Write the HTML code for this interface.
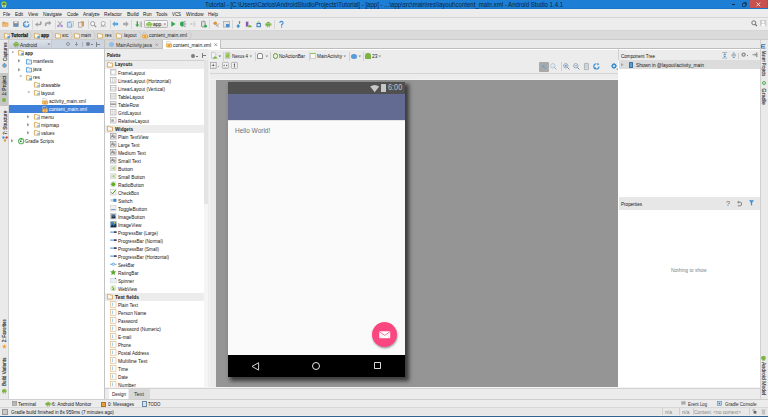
<!DOCTYPE html>
<html><head><meta charset="utf-8">
<style>
*{margin:0;padding:0;box-sizing:border-box}
html,body{width:768px;height:417px;overflow:hidden;background:#ececec;font-family:"Liberation Sans",sans-serif;position:relative}
.a{position:absolute}
.t{position:absolute;white-space:nowrap;line-height:1;transform-origin:0 50%;-webkit-text-stroke:0.02px currentColor}
svg.a{overflow:visible}
</style></head><body>
<div class="a" style="left:0px;top:0px;width:768px;height:9px;background:#1c7fd5;"></div>
<div class="a" style="left:0px;top:8.4px;width:768px;height:0.6px;background:#1a76c8;"></div>
<svg class="a" style="left:1px;top:0.8px" width="6" height="6.5" viewBox="0 0 6 6.5"><circle cx="2.9" cy="3.1" r="2.8" fill="#8cc53f"/><rect x="1.7" y="2.2" width="2.6" height="2" fill="#6b6b5a"/><path d="M1.1 4.2H5V6.4H1.1z" fill="#e6f2d8"/><rect x="1.7" y="4.6" width="2.6" height="1.1" fill="#5aa52a"/></svg>
<div class="t" style="left:205px;top:1.28px;font-size:7px;color:#0c2848;transform:scaleX(0.867);-webkit-text-stroke:0.05px currentColor">Tutorial - [C:\Users\Carlos\AndroidStudioProjects\Tutorial] - [app] - ...\app\src\main\res\layout\content_main.xml - Android Studio 1.4.1</div>
<div class="a" style="left:732px;top:4.2px;width:3.2px;height:0.8px;background:#14283f;"></div>
<svg class="a" style="left:741.8px;top:1.5px" width="5" height="5" viewBox="0 0 5 5"><path d="M1.5 0.5H4.5V3.5M0.5 1.5H3.5V4.5H0.5z" fill="none" stroke="#14283f" stroke-width="0.7"/></svg>
<div class="a" style="left:750px;top:0px;width:17px;height:7.5px;background:#c8504f;"></div>
<svg class="a" style="left:756.2px;top:1.6px" width="5" height="5" viewBox="0 0 5 5"><path d="M0.6 0.6L4.2 4.2M4.2 0.6L0.6 4.2" stroke="#fff" stroke-width="0.8"/></svg>
<div class="a" style="left:0px;top:9px;width:768px;height:8px;background:#ececec;"></div>
<div class="a" style="left:0px;top:17px;width:768px;height:1px;background:#d6d6d6;"></div>
<div class="t" style="left:2.5px;top:10.92px;font-size:6.1px;color:#1a1a1a;transform:scaleX(0.733);">File</div>
<div class="t" style="left:14.8px;top:10.92px;font-size:6.1px;color:#1a1a1a;transform:scaleX(0.780);">Edit</div>
<div class="t" style="left:28px;top:10.92px;font-size:6.1px;color:#1a1a1a;transform:scaleX(0.763);">View</div>
<div class="t" style="left:43px;top:10.92px;font-size:6.1px;color:#1a1a1a;transform:scaleX(0.789);">Navigate</div>
<div class="t" style="left:66.5px;top:10.92px;font-size:6.1px;color:#1a1a1a;transform:scaleX(0.789);">Code</div>
<div class="t" style="left:83px;top:10.92px;font-size:6.1px;color:#1a1a1a;transform:scaleX(0.760);">Analyze</div>
<div class="t" style="left:104px;top:10.92px;font-size:6.1px;color:#1a1a1a;transform:scaleX(0.768);">Refactor</div>
<div class="t" style="left:126.6px;top:10.92px;font-size:6.1px;color:#1a1a1a;transform:scaleX(0.863);">Build</div>
<div class="t" style="left:142.5px;top:10.92px;font-size:6.1px;color:#1a1a1a;transform:scaleX(0.778);">Run</div>
<div class="t" style="left:156px;top:10.92px;font-size:6.1px;color:#1a1a1a;transform:scaleX(0.808);">Tools</div>
<div class="t" style="left:172px;top:10.92px;font-size:6.1px;color:#1a1a1a;transform:scaleX(0.718);">VCS</div>
<div class="t" style="left:185.5px;top:10.92px;font-size:6.1px;color:#1a1a1a;transform:scaleX(0.807);">Window</div>
<div class="t" style="left:208px;top:10.92px;font-size:6.1px;color:#1a1a1a;transform:scaleX(0.797);">Help</div>
<div class="a" style="left:0px;top:18px;width:768px;height:12px;background:#ededed;"></div>
<div class="a" style="left:0px;top:30px;width:768px;height:0.8px;background:#d6d6d6;"></div>
<svg class="a" style="left:2.3px;top:21.1px" width="7" height="6" viewBox="0 0 7 6"><path d="M0.3 0.8H2.6L3.3 1.5H6.2V5.5H0.3z" fill="#d9a25a"/><path d="M0.6 2.4H6.6L6 5.6H0.3z" fill="#e9bb77"/></svg>
<svg class="a" style="left:12.8px;top:21.0px" width="6" height="6" viewBox="0 0 6 6"><rect x="0.3" y="0.3" width="5.2" height="5.4" fill="#7d7d7d"/><rect x="1.3" y="0.3" width="3.2" height="2" fill="#f0f0f0"/><rect x="1.6" y="3.3" width="2.6" height="2.4" fill="#5aa0dc"/></svg>
<svg class="a" style="left:22.5px;top:20.8px" width="6.5" height="6.5" viewBox="0 0 6.5 6.5"><path d="M3.2 0.6A2.7 2.7 0 1 0 5.9 3.3" fill="none" stroke="#3f8fd2" stroke-width="1.2"/><path d="M3.2 6A2.7 2.7 0 0 0 0.5 3.3" fill="none" stroke="#6fb0e6" stroke-width="0.8"/><path d="M4.3 0.1L6.2 1.2L4.3 2.3z" fill="#3f8fd2"/></svg>
<div class="a" style="left:32.4px;top:20px;width:0.7px;height:8.5px;background:#d6d6d6;"></div>
<svg class="a" style="left:35.3px;top:21.400000000000002px" width="6.5" height="5.5" viewBox="0 0 6.5 5.5"><path d="M5.8 0.4V2.4Q5.8 3.5 4.6 3.5H2.2" fill="none" stroke="#a0a0a0" stroke-width="1.6"/><path d="M0 3.5L2.6 1.2V5.8z" fill="#a0a0a0"/></svg>
<svg class="a" style="left:45px;top:21.400000000000002px" width="6.5" height="5.5" viewBox="0 0 6.5 5.5"><path d="M0.7 5V3.2Q0.7 2 1.9 2H4.2" fill="none" stroke="#a0a0a0" stroke-width="1.6"/><path d="M6.4 2L3.8 -0.3V4.3z" fill="#a0a0a0"/></svg>
<div class="a" style="left:54.6px;top:20px;width:0.7px;height:8.5px;background:#d6d6d6;"></div>
<svg class="a" style="left:57.2px;top:20.8px" width="6" height="6.5" viewBox="0 0 6 6.5"><path d="M1 0.3L4.2 4M5 0.3L1.8 4" stroke="#8a8a8a" stroke-width="0.8"/><circle cx="1.4" cy="5" r="1.3" fill="#b28bd6"/><circle cx="4.6" cy="5" r="1.3" fill="#b28bd6"/></svg>
<svg class="a" style="left:67px;top:20.8px" width="7" height="6.5" viewBox="0 0 7 6.5"><rect x="2" y="0.3" width="4.5" height="5" fill="#e6e6e6" stroke="#b0b0b0" stroke-width="0.5"/><path d="M0.4 1.3H3.5L4.6 2.4V6.2H0.4z" fill="#cfe2f4" stroke="#5b9bd5" stroke-width="0.7"/></svg>
<svg class="a" style="left:77.5px;top:20.8px" width="6.5" height="6.5" viewBox="0 0 6.5 6.5"><rect x="2.8" y="0.3" width="3.2" height="5" fill="#e49a3c"/><rect x="0.4" y="1.5" width="3.6" height="4.7" fill="#e9e9e9" stroke="#999" stroke-width="0.6"/></svg>
<div class="a" style="left:87.7px;top:20px;width:0.7px;height:8.5px;background:#d6d6d6;"></div>
<svg class="a" style="left:89.8px;top:20.8px" width="6.5" height="6.5" viewBox="0 0 6.5 6.5"><circle cx="2.7" cy="2.7" r="2.1" fill="#fafafa" stroke="#8c8c8c" stroke-width="0.8"/><path d="M4.3 4.3L6.2 6.2" stroke="#8c8c8c" stroke-width="1.1"/></svg>
<svg class="a" style="left:99.5px;top:20.8px" width="6.5" height="6.5" viewBox="0 0 6.5 6.5"><circle cx="3.2" cy="2.5" r="2" fill="#fafafa" stroke="#9a9a9a" stroke-width="0.8"/><path d="M1.8 4L0.8 6.2M4.6 4L5.6 6.2M2.4 5.6H4" stroke="#9a9a9a" stroke-width="0.7"/></svg>
<div class="a" style="left:109.7px;top:20px;width:0.7px;height:8.5px;background:#d6d6d6;"></div>
<svg class="a" style="left:112px;top:21.1px" width="6.5" height="6" viewBox="0 0 6.5 6"><path d="M0.2 3L3 0.3V1.8H6.2V4.2H3V5.7z" fill="#59a8e0"/></svg>
<svg class="a" style="left:122.8px;top:21.1px" width="6" height="6" viewBox="0 0 6 6"><path d="M5.8 3L3 0.3V1.8H0.2V4.2H3V5.7z" fill="#a9a9a9"/></svg>
<div class="a" style="left:131.4px;top:20px;width:0.7px;height:8.5px;background:#d6d6d6;"></div>
<svg class="a" style="left:134.5px;top:20.8px" width="7" height="6.5" viewBox="0 0 7 6.5"><path d="M1.6 0.3V3.6H0.3L2.3 6.2L4.3 3.6H3V0.3z" fill="#3aa845"/><rect x="4.8" y="0.5" width="0.8" height="5.7" fill="#a9a9a9"/><rect x="6" y="0.5" width="0.8" height="5.7" fill="#a9a9a9"/></svg>
<div class="a" style="left:143.7px;top:20.3px;width:24.6px;height:7.4px;background:linear-gradient(#fafafa,#e4e4e4);border:0.8px solid #b9b9b9;border-radius:1.2px"></div>
<svg class="a" style="left:145.6px;top:21.2px" width="6.5" height="6" viewBox="0 0 6.5 6"><path d="M0.5 2.2H6V4.6H0.5z" fill="#8bc34a"/><path d="M1.2 2Q3.25 -0.4 5.3 2z" fill="#8bc34a"/><rect x="1.6" y="4.4" width="1" height="1.4" fill="#8bc34a"/><rect x="3.9" y="4.4" width="1" height="1.4" fill="#8bc34a"/><rect x="0" y="2.3" width="0.6" height="1.8" fill="#8bc34a"/><rect x="5.9" y="2.3" width="0.6" height="1.8" fill="#8bc34a"/></svg>
<div class="t" style="left:153.2px;top:20.92px;font-size:6.1px;color:#111;transform:scaleX(0.825);">app</div>
<svg class="a" style="left:163.3px;top:22.70px" width="4" height="3" viewBox="0 0 4 3"><path d="M0.5 0.5h2.6l-1.3 1.8z" fill="#8a8a8a"/></svg>
<svg class="a" style="left:170.9px;top:21.1px" width="5" height="6" viewBox="0 0 5 6"><path d="M0.3 0.2L4.6 3L0.3 5.8z" fill="#2fa84f"/></svg>
<svg class="a" style="left:180.2px;top:21.1px" width="6.5" height="6" viewBox="0 0 6.5 6"><path d="M3.5 0.6A2.6 2.6 0 1 0 3.5 5.4z" fill="#2fa84f"/><path d="M3.6 1.5L5.6 0.3M3.6 3H6.2M3.6 4.5L5.6 5.7" stroke="#555" stroke-width="0.7"/></svg>
<svg class="a" style="left:190px;top:21.1px" width="6.5" height="6" viewBox="0 0 6.5 6"><path d="M0.5 1.5L2.6 3L0.5 4.5z" fill="#c4c4c4"/><path d="M3.6 1.5L5.6 0.3M3.6 3H6.2M3.6 4.5L5.6 5.7M3.6 1.2V4.8" stroke="#c4c4c4" stroke-width="0.7"/></svg>
<svg class="a" style="left:200.6px;top:20.8px" width="6.5" height="6.8" viewBox="0 0 6.5 6.8"><rect x="0.5" y="0.3" width="3.6" height="5.6" rx="0.6" fill="#dcdcdc" stroke="#777" stroke-width="0.7"/><circle cx="4.6" cy="5.2" r="1.4" fill="#2fa84f"/></svg>
<div class="a" style="left:209.2px;top:20px;width:0.7px;height:8.5px;background:#d6d6d6;"></div>
<svg class="a" style="left:212.7px;top:20.8px" width="6.5" height="6.5" viewBox="0 0 6.5 6.5"><circle cx="2.2" cy="2.2" r="1.8" fill="#d9953f"/><path d="M2.5 3.2L5.6 6.2M6.2 2.4L3.2 5.4" stroke="#9a9a9a" stroke-width="0.9"/></svg>
<svg class="a" style="left:222.8px;top:20.8px" width="7" height="6.5" viewBox="0 0 7 6.5"><rect x="0.4" y="0.5" width="6" height="5.6" fill="#e2e2e2" stroke="#999" stroke-width="0.6"/><rect x="3" y="3" width="3.4" height="3.1" fill="#4a90d0"/></svg>
<div class="a" style="left:232.4px;top:20px;width:0.7px;height:8.5px;background:#d6d6d6;"></div>
<svg class="a" style="left:235.8px;top:20.6px" width="5.5" height="7" viewBox="0 0 5.5 7"><path d="M3.5 0.2V3" stroke="#4caf50" stroke-width="1"/><path d="M2.1 1.6L3.5 0.1L4.9 1.6" fill="#4caf50"/><path d="M2.2 3.2V6.2M0.9 4.8L2.2 6.6L3.5 4.8z" stroke="#3b8fd4" fill="#3b8fd4" stroke-width="1"/></svg>
<svg class="a" style="left:245.2px;top:20.8px" width="7" height="6.5" viewBox="0 0 7 6.5"><rect x="0.4" y="0.3" width="3.4" height="5.9" fill="#cfcfcf"/><rect x="1" y="0.8" width="2.2" height="4.6" fill="#8b4fc0"/><path d="M3 6.2V5Q4.8 3.2 6.6 5V6.2z" fill="#7cb342"/></svg>
<svg class="a" style="left:255.8px;top:20.8px" width="5.5" height="6.5" viewBox="0 0 5.5 6.5"><path d="M0.8 1.4Q2.7 -0.3 4.6 1.4z" fill="#7cb342"/><rect x="0.5" y="2" width="4.4" height="4.2" fill="#3b7cbf"/><rect x="1.5" y="3" width="2.4" height="2.2" fill="#dfe9f3"/></svg>
<svg class="a" style="left:264.8px;top:20.8px" width="6.5" height="6.5" viewBox="0 0 6.5 6.5"><path d="M1.2 2Q3.25 -0.4 5.3 2z" fill="#7cb342"/><rect x="0.9" y="2.3" width="4.7" height="2.6" fill="#7cb342"/><rect x="0" y="2.4" width="0.7" height="2" fill="#7cb342"/><rect x="5.8" y="2.4" width="0.7" height="2" fill="#7cb342"/><rect x="1.8" y="4.8" width="1" height="1.5" fill="#7cb342"/><rect x="3.7" y="4.8" width="1" height="1.5" fill="#7cb342"/></svg>
<div class="a" style="left:274.2px;top:20px;width:0.7px;height:8.5px;background:#d6d6d6;"></div>
<svg class="a" style="left:278.9px;top:20.6px" width="5" height="7" viewBox="0 0 5 7"><path d="M0.8 2Q0.8 0.4 2.4 0.4Q4.1 0.4 4.1 2Q4.1 3 2.6 3.7V4.7" fill="none" stroke="#3d8fd6" stroke-width="1.1"/><rect x="2" y="5.4" width="1.2" height="1.2" fill="#3d8fd6"/></svg>
<svg class="a" style="left:750.5px;top:20px" width="6.5" height="6.5" viewBox="0 0 6.5 6.5"><circle cx="2.8" cy="2.8" r="2" fill="none" stroke="#6a6a6a" stroke-width="0.9"/><path d="M4.3 4.3L6 6" stroke="#6a6a6a" stroke-width="1.1"/></svg>
<svg class="a" style="left:760.3px;top:20.2px" width="6.5" height="6.3" viewBox="0 0 6.5 6.3"><rect x="0" y="0" width="6.4" height="6.2" fill="#cdcdcd"/><circle cx="3.2" cy="2" r="1.2" fill="#fbfbfb"/><path d="M1.2 6.2Q1.2 3.6 3.2 3.6Q5.2 3.6 5.2 6.2z" fill="#fbfbfb"/></svg>
<div class="a" style="left:0px;top:30.5px;width:768px;height:9px;background:#dadada;"></div>
<div class="a" style="left:0px;top:39.2px;width:768px;height:0.7px;background:#cbcbcb;"></div>
<svg class="a" style="left:4px;top:32.60px" width="6" height="5.5" viewBox="0 0 6 5.5"><path d="M0.45 0.45H2.3L2.9 1.1H5.55V5.05H0.45z" fill="#fdf9f0" stroke="#d4a862" stroke-width="0.9"/><rect x="3.4" y="2.9" width="2.4" height="2.4" fill="#5aa0d8"/></svg>
<div class="t" style="left:11.4px;top:32.02px;font-size:6.1px;color:#1a1a1a;font-weight:bold;transform:scaleX(0.776);-webkit-text-stroke:0.25px currentColor">Tutorial</div>
<svg class="a" style="left:34px;top:32.60px" width="6" height="5.5" viewBox="0 0 6 5.5"><path d="M0.45 0.45H2.3L2.9 1.1H5.55V5.05H0.45z" fill="#fdf9f0" stroke="#d4a862" stroke-width="0.9"/><rect x="3.4" y="2.9" width="2.4" height="2.4" fill="#5aa0d8"/></svg>
<div class="t" style="left:41.3px;top:32.02px;font-size:6.1px;color:#1a1a1a;font-weight:bold;transform:scaleX(0.738);-webkit-text-stroke:0.25px currentColor">app</div>
<svg class="a" style="left:55px;top:32.60px" width="6" height="5.5" viewBox="0 0 6 5.5"><path d="M0.45 0.45H2.3L2.9 1.1H5.55V5.05H0.45z" fill="#fdf9f0" stroke="#d4a862" stroke-width="0.9"/></svg>
<div class="t" style="left:62px;top:32.02px;font-size:6.1px;color:#1a1a1a;transform:scaleX(0.799);">src</div>
<svg class="a" style="left:74px;top:32.60px" width="6" height="5.5" viewBox="0 0 6 5.5"><path d="M0.45 0.45H2.3L2.9 1.1H5.55V5.05H0.45z" fill="#fdf9f0" stroke="#d4a862" stroke-width="0.9"/></svg>
<div class="t" style="left:81px;top:32.02px;font-size:6.1px;color:#1a1a1a;transform:scaleX(0.756);">main</div>
<svg class="a" style="left:97px;top:32.60px" width="6" height="5.5" viewBox="0 0 6 5.5"><path d="M0.45 0.45H2.3L2.9 1.1H5.55V5.05H0.45z" fill="#fdf9f0" stroke="#d4a862" stroke-width="0.9"/></svg>
<div class="t" style="left:104.5px;top:32.02px;font-size:6.1px;color:#1a1a1a;transform:scaleX(0.767);">res</div>
<svg class="a" style="left:116px;top:32.60px" width="6" height="5.5" viewBox="0 0 6 5.5"><path d="M0.45 0.45H2.3L2.9 1.1H5.55V5.05H0.45z" fill="#fdf9f0" stroke="#d4a862" stroke-width="0.9"/></svg>
<div class="t" style="left:123.5px;top:32.02px;font-size:6.1px;color:#1a1a1a;transform:scaleX(0.768);">layout</div>
<svg class="a" style="left:29.2px;top:30.5px" width="3" height="9" viewBox="0 0 3 9"><path d="M0.3 0.3L2.5 4.5L0.3 8.7" fill="none" stroke="#c0c0c0" stroke-width="0.6"/></svg>
<svg class="a" style="left:50.9px;top:30.5px" width="3" height="9" viewBox="0 0 3 9"><path d="M0.3 0.3L2.5 4.5L0.3 8.7" fill="none" stroke="#c0c0c0" stroke-width="0.6"/></svg>
<svg class="a" style="left:70.2px;top:30.5px" width="3" height="9" viewBox="0 0 3 9"><path d="M0.3 0.3L2.5 4.5L0.3 8.7" fill="none" stroke="#c0c0c0" stroke-width="0.6"/></svg>
<svg class="a" style="left:93.2px;top:30.5px" width="3" height="9" viewBox="0 0 3 9"><path d="M0.3 0.3L2.5 4.5L0.3 8.7" fill="none" stroke="#c0c0c0" stroke-width="0.6"/></svg>
<svg class="a" style="left:112.1px;top:30.5px" width="3" height="9" viewBox="0 0 3 9"><path d="M0.3 0.3L2.5 4.5L0.3 8.7" fill="none" stroke="#c0c0c0" stroke-width="0.6"/></svg>
<svg class="a" style="left:138.5px;top:30.5px" width="3" height="9" viewBox="0 0 3 9"><path d="M0.3 0.3L2.5 4.5L0.3 8.7" fill="none" stroke="#c0c0c0" stroke-width="0.6"/></svg>
<svg class="a" style="left:188.9px;top:30.5px" width="3" height="9" viewBox="0 0 3 9"><path d="M0.3 0.3L2.5 4.5L0.3 8.7" fill="none" stroke="#c0c0c0" stroke-width="0.6"/></svg>
<svg class="a" style="left:142px;top:32px" width="6.5" height="7" viewBox="0 0 6.5 7"><path d="M0.8 0.4H3.6L4.8 1.6V3" fill="none" stroke="#c4c4c4" stroke-width="0.7"/><path d="M0.8 0.4V3" stroke="#c4c4c4" stroke-width="0.7"/><rect x="0.1" y="2.6" width="6" height="3.9" rx="1.6" fill="#eaa23c"/><path d="M2.2 3.6L1.2 4.55L2.2 5.5M4 3.6L5 4.55L4 5.5" fill="none" stroke="#fff6e6" stroke-width="0.6"/></svg>
<div class="t" style="left:149px;top:32.02px;font-size:6.1px;color:#1a1a1a;transform:scaleX(0.795);">content_main.xml</div>
<div class="a" style="left:0px;top:40px;width:8.5px;height:359px;background:#eaeaea;"></div>
<div class="a" style="left:8.3px;top:40px;width:0.7px;height:359px;background:#d0d0d0;"></div>
<div class="a" style="left:0px;top:73.2px;width:8.3px;height:33.3px;background:#c6c6c6;"></div>
<div class="t" style="left:-6.36px;top:48.95px;font-size:5.6px;line-height:5.6px;color:#2a2a2a;transform-origin:50% 50%;transform:rotate(-90deg) scaleX(0.814);-webkit-text-stroke:0.15px currentColor">Captures</div>
<svg class="a" style="left:1.8px;top:63.2px" width="5" height="5" viewBox="0 0 5 5"><circle cx="2.5" cy="2.6" r="2" fill="#5aaee8" stroke="#a08a70" stroke-width="0.5"/><rect x="2" y="0" width="1" height="0.8" fill="#888"/></svg>
<div class="t" style="left:-6.83px;top:82.95px;font-size:5.6px;line-height:5.6px;color:#2a2a2a;transform-origin:50% 50%;transform:rotate(-90deg) scaleX(0.824);-webkit-text-stroke:0.15px currentColor">1: Project</div>
<div class="a" style="left:2.3px;top:97.5px;width:4px;height:4px;border-radius:50%;background:#7cb342"></div>
<div class="t" style="left:-9.47px;top:119.95px;font-size:5.6px;line-height:5.6px;color:#2a2a2a;transform-origin:50% 50%;transform:rotate(-90deg) scaleX(0.833);-webkit-text-stroke:0.15px currentColor">7: Structure</div>
<svg class="a" style="left:1.5px;top:136px" width="6" height="6" viewBox="0 0 6 6"><path d="M1.3 1.5L3 4.6M4.7 1.5L3 4.6M1.3 1.5H4.7" stroke="#999" stroke-width="0.5"/><circle cx="1.4" cy="1.5" r="1.2" fill="#4a9be0"/><circle cx="4.7" cy="1.5" r="1.2" fill="#e0504a"/><circle cx="3" cy="4.6" r="1.2" fill="#e8a040"/></svg>
<div class="t" style="left:-9.63px;top:327.70px;font-size:5.6px;line-height:5.6px;color:#2a2a2a;transform-origin:50% 50%;transform:rotate(-90deg) scaleX(0.786);-webkit-text-stroke:0.15px currentColor">2: Favorites</div>
<div class="a" style="left:1.8px;top:344px;width:5.2px;height:5.2px;background:#f0a030;clip-path:polygon(50% 0,61% 35%,98% 35%,68% 57%,79% 91%,50% 70%,21% 91%,32% 57%,2% 35%,39% 35%)"></div>
<div class="t" style="left:-12.07px;top:368.95px;font-size:5.6px;line-height:5.6px;color:#2a2a2a;transform-origin:50% 50%;transform:rotate(-90deg) scaleX(0.835);-webkit-text-stroke:0.15px currentColor">Build Variants</div>
<svg class="a" style="left:1.2px;top:388.3px" width="6.5" height="6" viewBox="0 0 6.5 6"><path d="M1 1.8Q3.25 -0.3 5.5 1.8z" fill="#7cb342"/><rect x="1" y="2" width="4.5" height="2.3" fill="#7cb342"/><rect x="1.8" y="4.2" width="1" height="1.4" fill="#7cb342"/><rect x="3.7" y="4.2" width="1" height="1.4" fill="#7cb342"/></svg>
<div class="a" style="left:9px;top:40px;width:95px;height:359px;background:#ffffff;"></div>
<div class="a" style="left:9px;top:39.6px;width:95px;height:8.8px;background:#cdd5e1;"></div>
<div class="a" style="left:9px;top:39.6px;width:42.5px;height:8.8px;background:linear-gradient(#dde2e9,#c8cfd9);"></div>
<div class="a" style="left:51.3px;top:39.6px;width:0.6px;height:8.8px;background:#c3c9d2;"></div>
<div class="a" style="left:9px;top:48.2px;width:95px;height:0.7px;background:#bcc3cc;"></div>
<svg class="a" style="left:12.5px;top:41.3px" width="6.5" height="6.5" viewBox="0 0 6.5 6.5"><path d="M1.2 2Q3.25 -0.4 5.3 2z" fill="#7cb342"/><rect x="0.9" y="2.3" width="4.7" height="2.6" fill="#7cb342"/><rect x="0" y="2.4" width="0.7" height="2" fill="#7cb342"/><rect x="5.8" y="2.4" width="0.7" height="2" fill="#7cb342"/><rect x="1.8" y="4.8" width="1" height="1.5" fill="#7cb342"/><rect x="3.7" y="4.8" width="1" height="1.5" fill="#7cb342"/></svg>
<div class="t" style="left:20px;top:41.52px;font-size:6.1px;color:#2a2a2a;transform:scaleX(0.809);">Android</div>
<svg class="a" style="left:47px;top:43.20px" width="4" height="3" viewBox="0 0 4 3"><path d="M0.5 0.5h2.6l-1.3 1.8z" fill="#777"/></svg>
<div class="a" style="left:66px;top:42px;width:4px;height:4px;border-radius:50%;border:1px solid #8d949c"></div>
<div class="a" style="left:74.8px;top:43.8px;width:3.5px;height:0.8px;background:#8d949c;"></div>
<div class="a" style="left:76.2px;top:42.3px;width:0.8px;height:3.8px;background:#8d949c;"></div>
<div class="a" style="left:81.5px;top:42px;width:0.6px;height:5px;background:#b0b7c0;"></div>
<div class="a" style="left:86px;top:42px;width:4px;height:4px;border-radius:50%;background:#7d848c"></div>
<div class="a" style="left:91px;top:44px;width:1.5px;height:1px;background:#7d848c;"></div>
<div class="a" style="left:96px;top:42px;width:0.8px;height:5px;background:#7d848c;"></div>
<div class="a" style="left:96.8px;top:43.8px;width:3.5px;height:0.8px;background:#7d848c;"></div>
<div class="a" style="left:9px;top:104.8px;width:95px;height:7.8px;background:#3d7fd9;"></div>
<svg class="a" style="left:10.5px;top:51.10px" width="4" height="3" viewBox="0 0 4 3"><path d="M0.5 0.5h2.6l-1.3 1.8z" fill="#9a9a9a"/></svg>
<svg class="a" style="left:18px;top:50.30px" width="6" height="5.5" viewBox="0 0 6 5.5"><path d="M0.45 0.45H2.3L2.9 1.1H5.55V5.05H0.45z" fill="#fdf9f0" stroke="#d4a862" stroke-width="0.9"/><rect x="3.4" y="2.9" width="2.4" height="2.4" fill="#5aa0d8"/></svg>
<div class="t" style="left:25px;top:49.82px;font-size:6.1px;color:#1a1a1a;font-weight:bold;transform:scaleX(0.738);">app</div>
<svg class="a" style="left:18.3px;top:59.400000000000006px" width="3" height="4" viewBox="0 0 3 4"><path d="M0 0v3.6l2.6-1.8z" fill="#9a9a9a"/></svg>
<svg class="a" style="left:26px;top:58.50px" width="6" height="5.5" viewBox="0 0 6 5.5"><path d="M0.45 0.45H2.3L2.9 1.1H5.55V5.05H0.45z" fill="#e4f0fa" stroke="#5b9ed6" stroke-width="0.9"/></svg>
<div class="t" style="left:33px;top:58.02px;font-size:6.1px;color:#1a1a1a;transform:scaleX(0.785);">manifests</div>
<svg class="a" style="left:18.3px;top:67.5px" width="3" height="4" viewBox="0 0 3 4"><path d="M0 0v3.6l2.6-1.8z" fill="#9a9a9a"/></svg>
<svg class="a" style="left:26px;top:66.60px" width="6" height="5.5" viewBox="0 0 6 5.5"><path d="M0.45 0.45H2.3L2.9 1.1H5.55V5.05H0.45z" fill="#e4f0fa" stroke="#5b9ed6" stroke-width="0.9"/></svg>
<div class="t" style="left:33px;top:66.12px;font-size:6.1px;color:#1a1a1a;transform:scaleX(0.760);">java</div>
<svg class="a" style="left:18.5px;top:75.30px" width="4" height="3" viewBox="0 0 4 3"><path d="M0.5 0.5h2.6l-1.3 1.8z" fill="#9a9a9a"/></svg>
<svg class="a" style="left:26px;top:74.50px" width="6" height="5.5" viewBox="0 0 6 5.5"><path d="M0.45 0.45H2.3L2.9 1.1H5.55V5.05H0.45z" fill="#fdf9f0" stroke="#d4a862" stroke-width="0.9"/><rect x="3.4" y="2.9" width="2.4" height="2.4" fill="#5aa0d8"/></svg>
<div class="t" style="left:33px;top:74.02px;font-size:6.1px;color:#1a1a1a;transform:scaleX(0.826);">res</div>
<svg class="a" style="left:34px;top:82.40px" width="6" height="5.5" viewBox="0 0 6 5.5"><path d="M0.45 0.45H2.3L2.9 1.1H5.55V5.05H0.45z" fill="#fdf9f0" stroke="#d4a862" stroke-width="0.9"/><rect x="3.4" y="2.9" width="2.4" height="2.4" fill="#8fb8dc"/></svg>
<div class="t" style="left:41px;top:81.92px;font-size:6.1px;color:#1a1a1a;transform:scaleX(0.788);">drawable</div>
<svg class="a" style="left:26.5px;top:91.20px" width="4" height="3" viewBox="0 0 4 3"><path d="M0.5 0.5h2.6l-1.3 1.8z" fill="#9a9a9a"/></svg>
<svg class="a" style="left:34px;top:90.40px" width="6" height="5.5" viewBox="0 0 6 5.5"><path d="M0.45 0.45H2.3L2.9 1.1H5.55V5.05H0.45z" fill="#fdf9f0" stroke="#d4a862" stroke-width="0.9"/><rect x="3.4" y="2.9" width="2.4" height="2.4" fill="#8fb8dc"/></svg>
<div class="t" style="left:41px;top:89.92px;font-size:6.1px;color:#1a1a1a;transform:scaleX(0.829);">layout</div>
<svg class="a" style="left:42px;top:97.6px" width="6.5" height="7" viewBox="0 0 6.5 7"><path d="M0.8 0.4H3.6L4.8 1.6V3" fill="none" stroke="#c4c4c4" stroke-width="0.7"/><path d="M0.8 0.4V3" stroke="#c4c4c4" stroke-width="0.7"/><rect x="0.1" y="2.6" width="6" height="3.9" rx="1.6" fill="#eaa23c"/><path d="M2.2 3.6L1.2 4.55L2.2 5.5M4 3.6L5 4.55L4 5.5" fill="none" stroke="#fff6e6" stroke-width="0.6"/></svg>
<div class="t" style="left:49px;top:97.92px;font-size:6.1px;color:#1a1a1a;transform:scaleX(0.797);">activity_main.xml</div>
<svg class="a" style="left:42px;top:105.5px" width="6.5" height="7" viewBox="0 0 6.5 7"><path d="M0.8 0.4H3.6L4.8 1.6V3" fill="none" stroke="#c4c4c4" stroke-width="0.7"/><path d="M0.8 0.4V3" stroke="#c4c4c4" stroke-width="0.7"/><rect x="0.1" y="2.6" width="6" height="3.9" rx="1.6" fill="#eaa23c"/><path d="M2.2 3.6L1.2 4.55L2.2 5.5M4 3.6L5 4.55L4 5.5" fill="none" stroke="#fff6e6" stroke-width="0.6"/></svg>
<div class="t" style="left:49px;top:105.82px;font-size:6.1px;color:#fff;transform:scaleX(0.795);">content_main.xml</div>
<svg class="a" style="left:26.8px;top:115.2px" width="3" height="4" viewBox="0 0 3 4"><path d="M0 0v3.6l2.6-1.8z" fill="#9a9a9a"/></svg>
<svg class="a" style="left:34px;top:114.30px" width="6" height="5.5" viewBox="0 0 6 5.5"><path d="M0.45 0.45H2.3L2.9 1.1H5.55V5.05H0.45z" fill="#fdf9f0" stroke="#d4a862" stroke-width="0.9"/><rect x="3.4" y="2.9" width="2.4" height="2.4" fill="#8fb8dc"/></svg>
<div class="t" style="left:41px;top:113.82px;font-size:6.1px;color:#1a1a1a;transform:scaleX(0.852);">menu</div>
<svg class="a" style="left:26.8px;top:123.2px" width="3" height="4" viewBox="0 0 3 4"><path d="M0 0v3.6l2.6-1.8z" fill="#9a9a9a"/></svg>
<svg class="a" style="left:34px;top:122.30px" width="6" height="5.5" viewBox="0 0 6 5.5"><path d="M0.45 0.45H2.3L2.9 1.1H5.55V5.05H0.45z" fill="#fdf9f0" stroke="#d4a862" stroke-width="0.9"/><rect x="3.4" y="2.9" width="2.4" height="2.4" fill="#8fb8dc"/></svg>
<div class="t" style="left:41px;top:121.82px;font-size:6.1px;color:#1a1a1a;transform:scaleX(0.830);">mipmap</div>
<svg class="a" style="left:26.8px;top:131.2px" width="3" height="4" viewBox="0 0 3 4"><path d="M0 0v3.6l2.6-1.8z" fill="#9a9a9a"/></svg>
<svg class="a" style="left:34px;top:130.30px" width="6" height="5.5" viewBox="0 0 6 5.5"><path d="M0.45 0.45H2.3L2.9 1.1H5.55V5.05H0.45z" fill="#fdf9f0" stroke="#d4a862" stroke-width="0.9"/><rect x="3.4" y="2.9" width="2.4" height="2.4" fill="#8fb8dc"/></svg>
<div class="t" style="left:41px;top:129.82px;font-size:6.1px;color:#1a1a1a;transform:scaleX(0.766);">values</div>
<svg class="a" style="left:10.8px;top:139.2px" width="3" height="4" viewBox="0 0 3 4"><path d="M0 0v3.6l2.6-1.8z" fill="#9a9a9a"/></svg>
<svg class="a" style="left:18px;top:137.8px" width="6.5" height="6.5" viewBox="0 0 6.5 6.5"><circle cx="3.2" cy="3.2" r="2.6" fill="#fff" stroke="#5cb85c" stroke-width="1.1"/><path d="M2 2.2L4.4 3.2L2 4.3z" fill="#1e7a3a"/><circle cx="3.5" cy="1" r="0.8" fill="#2e9a4a"/></svg>
<div class="t" style="left:25px;top:137.82px;font-size:6.1px;color:#1a1a1a;transform:scaleX(0.750);">Gradle Scripts</div>
<div class="a" style="left:104px;top:40px;width:656px;height:8.6px;background:#e9e9e9;"></div>
<div class="a" style="left:104px;top:40px;width:58px;height:8.6px;background:#d5d5d5;"></div>
<div class="a" style="left:162px;top:40px;width:58.5px;height:9.5px;background:#ffffff;"></div>
<div class="a" style="left:104px;top:48.3px;width:58px;height:0.7px;background:#bdbdbd;"></div>
<div class="a" style="left:220.5px;top:48.3px;width:539.5px;height:0.7px;background:#bdbdbd;"></div>
<div class="a" style="left:104px;top:40px;width:0.7px;height:9px;background:#c0c0c0;"></div>
<div class="a" style="left:161.7px;top:40px;width:0.6px;height:9px;background:#c0c0c0;"></div>
<div class="a" style="left:220.3px;top:40px;width:0.6px;height:9px;background:#c0c0c0;"></div>
<div class="a" style="left:109px;top:41.8px;width:5px;height:5px;border-radius:50%;background:#8cc0e6"></div>
<div class="t" style="left:116px;top:41.52px;font-size:6.1px;color:#333;transform:scaleX(0.801);">MainActivity.java</div>
<svg class="a" style="left:155.3px;top:42.9px" width="3.5" height="3.5" viewBox="0 0 3.5 3.5"><path d="M0.4 0.4L3 3M3 0.4L0.4 3" stroke="#8a8a8a" stroke-width="0.6"/></svg>
<svg class="a" style="left:166px;top:41px" width="6.5" height="7" viewBox="0 0 6.5 7"><path d="M0.8 0.4H3.6L4.8 1.6V3" fill="none" stroke="#c4c4c4" stroke-width="0.7"/><path d="M0.8 0.4V3" stroke="#c4c4c4" stroke-width="0.7"/><rect x="0.1" y="2.6" width="6" height="3.9" rx="1.6" fill="#eaa23c"/><path d="M2.2 3.6L1.2 4.55L2.2 5.5M4 3.6L5 4.55L4 5.5" fill="none" stroke="#fff6e6" stroke-width="0.6"/></svg>
<div class="t" style="left:173px;top:41.52px;font-size:6.1px;color:#111;transform:scaleX(0.795);">content_main.xml</div>
<svg class="a" style="left:213.8px;top:42.9px" width="3.5" height="3.5" viewBox="0 0 3.5 3.5"><path d="M0.4 0.4L3 3M3 0.4L0.4 3" stroke="#666" stroke-width="0.6"/></svg>
<div class="a" style="left:104px;top:49px;width:104px;height:338px;background:#ffffff;"></div>
<div class="a" style="left:104px;top:49px;width:0.7px;height:350px;background:#c4c4c4;"></div>
<div class="a" style="left:104.7px;top:49px;width:103.5px;height:11px;background:#ececec;"></div>
<div class="a" style="left:104.7px;top:59.6px;width:99.5px;height:0.7px;background:#d0d0d0;"></div>
<div class="t" style="left:107px;top:53.36px;font-size:5px;color:#222;font-weight:bold;transform:scaleX(0.823);">Palette</div>
<div class="a" style="left:191px;top:53.5px;width:4px;height:4px;border-radius:50%;background:#7d7d7d"></div>
<div class="a" style="left:196px;top:55.5px;width:1.5px;height:0.8px;background:#7d7d7d;"></div>
<div class="a" style="left:201.5px;top:53px;width:0.8px;height:5px;background:#7d7d7d;"></div>
<div class="a" style="left:202.3px;top:54.8px;width:3.5px;height:0.8px;background:#7d7d7d;"></div>
<div class="a" style="left:203.7px;top:60.3px;width:4.8px;height:327px;background:#f5f5f5;"></div>
<div class="a" style="left:203.9px;top:60.3px;width:4.4px;height:144.2px;background:#e4e4e4;border-radius:0 0 1px 1px"></div>
<div class="a" style="left:208.5px;top:49px;width:0.7px;height:338px;background:#d6d6d6;"></div>
<div class="a" style="left:209.2px;top:49px;width:0.8px;height:338px;background:#f2f2f2;"></div>
<div class="a" style="left:104.7px;top:60.5px;width:99.3px;height:8px;background:#ececec;"></div>
<svg class="a" style="left:107px;top:62.00px" width="6" height="5.5" viewBox="0 0 6 5.5"><path d="M0.45 0.45H2.3L2.9 1.1H5.55V5.05H0.45z" fill="#fdf9f0" stroke="#d4a862" stroke-width="0.9"/></svg>
<div class="t" style="left:115px;top:62.46px;font-size:5px;color:#222;font-weight:bold;transform:scaleX(0.913);">Layouts</div>
<div class="a" style="left:104.7px;top:124.6px;width:99.3px;height:8px;background:#ececec;"></div>
<svg class="a" style="left:107px;top:126.10px" width="6" height="5.5" viewBox="0 0 6 5.5"><path d="M0.45 0.45H2.3L2.9 1.1H5.55V5.05H0.45z" fill="#fdf9f0" stroke="#d4a862" stroke-width="0.9"/></svg>
<div class="t" style="left:115px;top:126.56px;font-size:5px;color:#222;font-weight:bold;transform:scaleX(0.928);">Widgets</div>
<div class="a" style="left:104.7px;top:292.8px;width:99.3px;height:8px;background:#ececec;"></div>
<svg class="a" style="left:107px;top:294.30px" width="6" height="5.5" viewBox="0 0 6 5.5"><path d="M0.45 0.45H2.3L2.9 1.1H5.55V5.05H0.45z" fill="#fdf9f0" stroke="#d4a862" stroke-width="0.9"/></svg>
<div class="t" style="left:115px;top:294.76px;font-size:5px;color:#222;font-weight:bold;transform:scaleX(0.985);">Text fields</div>
<svg class="a" style="left:110px;top:69.20px" width="6.5" height="6.5" viewBox="0 0 6.5 6.5"><rect x="0.5" y="0.5" width="5.5" height="5.5" fill="#f3f3f3" stroke="#bdbdbd" stroke-width="0.8"/><rect x="1.5" y="1.5" width="3.5" height="3.5" fill="#fff" stroke="#d6d6d6" stroke-width="0.5"/></svg>
<div class="t" style="left:118px;top:69.72px;font-size:6.1px;color:#222;transform:scaleX(0.751);">FrameLayout</div>
<svg class="a" style="left:110px;top:77.20px" width="6.5" height="6.5" viewBox="0 0 6.5 6.5"><rect x="0.5" y="0.5" width="5.5" height="5.5" fill="#fff" stroke="#b5b5b5" stroke-width="0.8"/><path d="M2.4 0.5V6M4.2 0.5V6" stroke="#b5b5b5" stroke-width="0.6"/></svg>
<div class="t" style="left:118px;top:77.72px;font-size:6.1px;color:#222;transform:scaleX(0.774);">LinearLayout (Horizontal)</div>
<svg class="a" style="left:110px;top:85.20px" width="6.5" height="6.5" viewBox="0 0 6.5 6.5"><rect x="0.5" y="0.5" width="5.5" height="5.5" fill="#fff" stroke="#b5b5b5" stroke-width="0.8"/><path d="M0.5 2.4H6M0.5 4.2H6" stroke="#b5b5b5" stroke-width="0.6"/></svg>
<div class="t" style="left:118px;top:85.72px;font-size:6.1px;color:#222;transform:scaleX(0.770);">LinearLayout (Vertical)</div>
<svg class="a" style="left:110px;top:93.20px" width="6.5" height="6.5" viewBox="0 0 6.5 6.5"><rect x="0.5" y="0.5" width="5.5" height="5.5" fill="#e9e9e9" stroke="#bdbdbd" stroke-width="0.8"/><path d="M0.5 3.2H6" stroke="#cfcfcf" stroke-width="0.8"/></svg>
<div class="t" style="left:118px;top:93.72px;font-size:6.1px;color:#222;transform:scaleX(0.790);">TableLayout</div>
<svg class="a" style="left:110px;top:101.20px" width="6.5" height="6.5" viewBox="0 0 6.5 6.5"><rect x="0.5" y="0.5" width="5.5" height="5.5" fill="#f1f1f1" stroke="#bdbdbd" stroke-width="0.8"/><rect x="0.5" y="2.4" width="5.5" height="1.6" fill="#9e9e9e"/></svg>
<div class="t" style="left:118px;top:101.72px;font-size:6.1px;color:#222;transform:scaleX(0.784);">TableRow</div>
<svg class="a" style="left:110px;top:109.20px" width="6.5" height="6.5" viewBox="0 0 6.5 6.5"><rect x="0.5" y="0.5" width="5.5" height="5.5" fill="#fff" stroke="#b5b5b5" stroke-width="0.8"/><path d="M2.4 0.5V6M4.2 0.5V6M0.5 2.4H6M0.5 4.2H6" stroke="#c5c5c5" stroke-width="0.5"/></svg>
<div class="t" style="left:118px;top:109.72px;font-size:6.1px;color:#222;transform:scaleX(0.771);">GridLayout</div>
<svg class="a" style="left:110px;top:117.20px" width="6.5" height="6.5" viewBox="0 0 6.5 6.5"><rect x="0.5" y="0.5" width="5.5" height="5.5" fill="#f3f3f3" stroke="#bdbdbd" stroke-width="0.8"/><rect x="1.3" y="2.3" width="2.5" height="2.5" fill="#a9a9a9"/></svg>
<div class="t" style="left:118px;top:117.72px;font-size:6.1px;color:#222;transform:scaleX(0.768);">RelativeLayout</div>
<svg class="a" style="left:110px;top:133.20px" width="6.5" height="6.5" viewBox="0 0 6.5 6.5"><rect x="0.5" y="0.5" width="5.5" height="5.5" fill="#f7f7f7" stroke="#9a9a9a" stroke-width="0.7"/><path d="M1.3 4.6L2.3 1.6L3.3 4.6M1.7 3.6H2.9M3.8 1.6V4.6Q5.2 4.6 5.2 3.7Q5.2 3 3.8 3" fill="none" stroke="#555" stroke-width="0.55"/></svg>
<div class="t" style="left:118px;top:133.72px;font-size:6.1px;color:#222;transform:scaleX(0.773);">Plain TextView</div>
<svg class="a" style="left:110px;top:141.20px" width="6.5" height="6.5" viewBox="0 0 6.5 6.5"><rect x="0.5" y="0.5" width="5.5" height="5.5" fill="#f7f7f7" stroke="#9a9a9a" stroke-width="0.7"/><path d="M1.3 4.6L2.3 1.6L3.3 4.6M1.7 3.6H2.9M3.8 1.6V4.6Q5.2 4.6 5.2 3.7Q5.2 3 3.8 3" fill="none" stroke="#555" stroke-width="0.55"/></svg>
<div class="t" style="left:118px;top:141.72px;font-size:6.1px;color:#222;transform:scaleX(0.758);">Large Text</div>
<svg class="a" style="left:110px;top:149.20px" width="6.5" height="6.5" viewBox="0 0 6.5 6.5"><rect x="0.5" y="0.5" width="5.5" height="5.5" fill="#f7f7f7" stroke="#9a9a9a" stroke-width="0.7"/><path d="M1.3 4.6L2.3 1.6L3.3 4.6M1.7 3.6H2.9M3.8 1.6V4.6Q5.2 4.6 5.2 3.7Q5.2 3 3.8 3" fill="none" stroke="#555" stroke-width="0.55"/></svg>
<div class="t" style="left:118px;top:149.72px;font-size:6.1px;color:#222;transform:scaleX(0.812);">Medium Text</div>
<svg class="a" style="left:110px;top:157.20px" width="6.5" height="6.5" viewBox="0 0 6.5 6.5"><rect x="0.5" y="0.5" width="5.5" height="5.5" fill="#f7f7f7" stroke="#9a9a9a" stroke-width="0.7"/><path d="M1.3 4.6L2.3 1.6L3.3 4.6M1.7 3.6H2.9M3.8 1.6V4.6Q5.2 4.6 5.2 3.7Q5.2 3 3.8 3" fill="none" stroke="#555" stroke-width="0.55"/></svg>
<div class="t" style="left:118px;top:157.72px;font-size:6.1px;color:#222;transform:scaleX(0.821);">Small Text</div>
<svg class="a" style="left:110px;top:165.20px" width="6.5" height="6.5" viewBox="0 0 6.5 6.5"><rect x="0.5" y="0.8" width="5.5" height="5" fill="#e3ecd5" stroke="#d0d0d0" stroke-width="0.6"/><path d="M1.5 3.3H2.7M3.4 2.4V4.2M3.4 3.3L4.8 2.4M3.4 3.3L4.8 4.2" stroke="#8cb85a" stroke-width="0.6"/></svg>
<div class="t" style="left:118px;top:165.72px;font-size:6.1px;color:#222;transform:scaleX(0.851);">Button</div>
<svg class="a" style="left:110px;top:173.20px" width="6.5" height="6.5" viewBox="0 0 6.5 6.5"><rect x="0.5" y="0.8" width="5.5" height="5" fill="#e3ecd5" stroke="#d0d0d0" stroke-width="0.6"/><path d="M1.5 3.3H2.7M3.4 2.4V4.2M3.4 3.3L4.8 2.4M3.4 3.3L4.8 4.2" stroke="#8cb85a" stroke-width="0.6"/></svg>
<div class="t" style="left:118px;top:173.72px;font-size:6.1px;color:#222;transform:scaleX(0.781);">Small Button</div>
<svg class="a" style="left:110px;top:181.20px" width="6.5" height="6.5" viewBox="0 0 6.5 6.5"><circle cx="3.25" cy="3.25" r="2.8" fill="#fff" stroke="#bbb" stroke-width="0.5"/><circle cx="3.25" cy="3.25" r="2" fill="#5fae1f"/></svg>
<div class="t" style="left:118px;top:181.72px;font-size:6.1px;color:#222;transform:scaleX(0.774);">RadioButton</div>
<svg class="a" style="left:110px;top:189.20px" width="6.5" height="6.5" viewBox="0 0 6.5 6.5"><rect x="0.5" y="0.5" width="5.5" height="5.5" fill="#f4f4f4" stroke="#c4c4c4" stroke-width="0.6"/><path d="M1.2 3.3L2.6 4.8L5.6 1.2" fill="none" stroke="#4d9a16" stroke-width="1"/></svg>
<div class="t" style="left:118px;top:189.72px;font-size:6.1px;color:#222;transform:scaleX(0.755);">CheckBox</div>
<svg class="a" style="left:110px;top:197.20px" width="6.5" height="6.5" viewBox="0 0 6.5 6.5"><rect x="0.3" y="2" width="6" height="2.6" fill="#cfd8e0"/><rect x="3.4" y="1.8" width="3" height="3" fill="#3f88c5"/></svg>
<div class="t" style="left:118px;top:197.72px;font-size:6.1px;color:#222;transform:scaleX(0.807);">Switch</div>
<svg class="a" style="left:110px;top:205.20px" width="6.5" height="6.5" viewBox="0 0 6.5 6.5"><rect x="0.5" y="0.5" width="5.5" height="5.5" fill="#f0f0f0" stroke="#c8c8c8" stroke-width="0.6"/><rect x="1.2" y="4" width="4.2" height="1" fill="#6a9cc8"/></svg>
<div class="t" style="left:118px;top:205.72px;font-size:6.1px;color:#222;transform:scaleX(0.814);">ToggleButton</div>
<svg class="a" style="left:110px;top:213.20px" width="6.5" height="6.5" viewBox="0 0 6.5 6.5"><rect x="0.5" y="0.5" width="5.5" height="5.5" fill="#e6e6e6" stroke="#bbb" stroke-width="0.6"/><rect x="1.3" y="1.3" width="4" height="4" fill="#4a6a8a"/><path d="M1.3 5.3L2.8 3.3L3.8 4.3L5.3 2.8V5.3z" fill="#1c2c3c"/></svg>
<div class="t" style="left:118px;top:213.72px;font-size:6.1px;color:#222;transform:scaleX(0.781);">ImageButton</div>
<svg class="a" style="left:110px;top:221.20px" width="6.5" height="6.5" viewBox="0 0 6.5 6.5"><rect x="0.3" y="0.3" width="6" height="6" fill="#3a7fc2" stroke="#bbb" stroke-width="0.5"/><circle cx="4.6" cy="1.8" r="0.8" fill="#f5d33c"/><path d="M0.3 6.3L2.2 3.3L3.6 4.8L6.3 2.6V6.3z" fill="#17324d"/></svg>
<div class="t" style="left:118px;top:221.72px;font-size:6.1px;color:#222;transform:scaleX(0.782);">ImageView</div>
<svg class="a" style="left:110px;top:229.20px" width="6.5" height="6.5" viewBox="0 0 6.5 6.5"><rect x="0.2" y="2.6" width="6.3" height="1" fill="#3b8fd4"/><rect x="4" y="2.4" width="2.6" height="1.4" fill="#333"/></svg>
<div class="t" style="left:118px;top:229.72px;font-size:6.1px;color:#222;transform:scaleX(0.724);">ProgressBar (Large)</div>
<svg class="a" style="left:110px;top:237.20px" width="6.5" height="6.5" viewBox="0 0 6.5 6.5"><rect x="0.2" y="2.6" width="6.3" height="1" fill="#3b8fd4"/><rect x="4" y="2.4" width="2.6" height="1.4" fill="#333"/></svg>
<div class="t" style="left:118px;top:237.72px;font-size:6.1px;color:#222;transform:scaleX(0.759);">ProgressBar (Normal)</div>
<svg class="a" style="left:110px;top:245.20px" width="6.5" height="6.5" viewBox="0 0 6.5 6.5"><rect x="0.2" y="2.6" width="6.3" height="1" fill="#3b8fd4"/><rect x="4" y="2.4" width="2.6" height="1.4" fill="#333"/></svg>
<div class="t" style="left:118px;top:245.72px;font-size:6.1px;color:#222;transform:scaleX(0.747);">ProgressBar (Small)</div>
<svg class="a" style="left:110px;top:253.20px" width="6.5" height="6.5" viewBox="0 0 6.5 6.5"><rect x="0.2" y="2.6" width="6.3" height="1" fill="#3b8fd4"/><rect x="4" y="2.4" width="2.6" height="1.4" fill="#333"/></svg>
<div class="t" style="left:118px;top:253.72px;font-size:6.1px;color:#222;transform:scaleX(0.760);">ProgressBar (Horizontal)</div>
<svg class="a" style="left:110px;top:261.20px" width="6.5" height="6.5" viewBox="0 0 6.5 6.5"><rect x="0.2" y="2.8" width="6.3" height="0.8" fill="#3b8fd4"/><circle cx="3.3" cy="3.2" r="1.2" fill="#fff" stroke="#3b8fd4" stroke-width="0.7"/></svg>
<div class="t" style="left:118px;top:261.72px;font-size:6.1px;color:#222;transform:scaleX(0.705);">SeekBar</div>
<svg class="a" style="left:110px;top:269.20px" width="6.5" height="6.5" viewBox="0 0 6.5 6.5"><path d="M3.25 0.2L4.2 2.3L6.4 2.4L4.7 3.9L5.3 6.2L3.25 4.9L1.2 6.2L1.8 3.9L0.1 2.4L2.3 2.3z" fill="#62a934"/></svg>
<div class="t" style="left:118px;top:269.72px;font-size:6.1px;color:#222;transform:scaleX(0.756);">RatingBar</div>
<svg class="a" style="left:110px;top:277.20px" width="6.5" height="6.5" viewBox="0 0 6.5 6.5"><rect x="0.3" y="1.5" width="6" height="4.5" fill="#e9eff5" stroke="#c5d0da" stroke-width="0.5"/><path d="M4.3 1.3L6 0.4V2.2z" fill="#3b8fd4"/></svg>
<div class="t" style="left:118px;top:277.72px;font-size:6.1px;color:#222;transform:scaleX(0.761);">Spinner</div>
<svg class="a" style="left:110px;top:285.20px" width="6.5" height="6.5" viewBox="0 0 6.5 6.5"><circle cx="3.25" cy="3.25" r="2.9" fill="#dfeccf" stroke="#cfd9c2" stroke-width="0.4"/><path d="M2 1.6Q4.5 2.5 2.8 4.9Q3.9 5.2 4.5 3.8" fill="none" stroke="#5a9a2a" stroke-width="0.9"/></svg>
<div class="t" style="left:118px;top:285.72px;font-size:6.1px;color:#222;transform:scaleX(0.744);">WebView</div>
<svg class="a" style="left:110px;top:301.20px" width="6.5" height="6.5" viewBox="0 0 6.5 6.5"><rect x="0.5" y="0.5" width="5.5" height="5.8" fill="#fff" stroke="#e3c59a" stroke-width="0.8"/><path d="M2.4 1.6V5.2" stroke="#7fb0dc" stroke-width="0.7"/></svg>
<div class="t" style="left:118px;top:301.72px;font-size:6.1px;color:#222;transform:scaleX(0.759);">Plain Text</div>
<svg class="a" style="left:110px;top:309.20px" width="6.5" height="6.5" viewBox="0 0 6.5 6.5"><rect x="0.5" y="0.5" width="5.5" height="5.8" fill="#fff" stroke="#e3c59a" stroke-width="0.8"/><path d="M2.4 1.6V5.2" stroke="#7fb0dc" stroke-width="0.7"/></svg>
<div class="t" style="left:118px;top:309.72px;font-size:6.1px;color:#222;transform:scaleX(0.764);">Person Name</div>
<svg class="a" style="left:110px;top:317.20px" width="6.5" height="6.5" viewBox="0 0 6.5 6.5"><rect x="0.5" y="0.5" width="5.5" height="5.8" fill="#fff" stroke="#e3c59a" stroke-width="0.8"/><path d="M2.4 1.6V5.2" stroke="#7fb0dc" stroke-width="0.7"/></svg>
<div class="t" style="left:118px;top:317.72px;font-size:6.1px;color:#222;transform:scaleX(0.728);">Password</div>
<svg class="a" style="left:110px;top:325.20px" width="6.5" height="6.5" viewBox="0 0 6.5 6.5"><rect x="0.5" y="0.5" width="5.5" height="5.8" fill="#fff" stroke="#e3c59a" stroke-width="0.8"/><path d="M2.4 1.6V5.2" stroke="#7fb0dc" stroke-width="0.7"/></svg>
<div class="t" style="left:118px;top:325.72px;font-size:6.1px;color:#222;transform:scaleX(0.778);">Password (Numeric)</div>
<svg class="a" style="left:110px;top:333.20px" width="6.5" height="6.5" viewBox="0 0 6.5 6.5"><rect x="0.5" y="0.5" width="5.5" height="5.8" fill="#fff" stroke="#e3c59a" stroke-width="0.8"/><path d="M2.4 1.6V5.2" stroke="#7fb0dc" stroke-width="0.7"/></svg>
<div class="t" style="left:118px;top:333.72px;font-size:6.1px;color:#222;transform:scaleX(0.764);">E-mail</div>
<svg class="a" style="left:110px;top:341.20px" width="6.5" height="6.5" viewBox="0 0 6.5 6.5"><rect x="0.5" y="0.5" width="5.5" height="5.8" fill="#fff" stroke="#e3c59a" stroke-width="0.8"/><path d="M2.4 1.6V5.2" stroke="#7fb0dc" stroke-width="0.7"/></svg>
<div class="t" style="left:118px;top:341.72px;font-size:6.1px;color:#222;transform:scaleX(0.737);">Phone</div>
<svg class="a" style="left:110px;top:349.20px" width="6.5" height="6.5" viewBox="0 0 6.5 6.5"><rect x="0.5" y="0.5" width="5.5" height="5.8" fill="#fff" stroke="#e3c59a" stroke-width="0.8"/><path d="M2.4 1.6V5.2" stroke="#7fb0dc" stroke-width="0.7"/></svg>
<div class="t" style="left:118px;top:349.72px;font-size:6.1px;color:#222;transform:scaleX(0.762);">Postal Address</div>
<svg class="a" style="left:110px;top:357.20px" width="6.5" height="6.5" viewBox="0 0 6.5 6.5"><rect x="0.5" y="0.5" width="5.5" height="5.8" fill="#fff" stroke="#e3c59a" stroke-width="0.8"/><path d="M2.4 1.6V5.2" stroke="#7fb0dc" stroke-width="0.7"/></svg>
<div class="t" style="left:118px;top:357.72px;font-size:6.1px;color:#222;transform:scaleX(0.839);">Multiline Text</div>
<svg class="a" style="left:110px;top:365.20px" width="6.5" height="6.5" viewBox="0 0 6.5 6.5"><rect x="0.5" y="0.5" width="5.5" height="5.8" fill="#fff" stroke="#e3c59a" stroke-width="0.8"/><path d="M2.4 1.6V5.2" stroke="#7fb0dc" stroke-width="0.7"/></svg>
<div class="t" style="left:118px;top:365.72px;font-size:6.1px;color:#222;transform:scaleX(0.765);">Time</div>
<svg class="a" style="left:110px;top:373.20px" width="6.5" height="6.5" viewBox="0 0 6.5 6.5"><rect x="0.5" y="0.5" width="5.5" height="5.8" fill="#fff" stroke="#e3c59a" stroke-width="0.8"/><path d="M2.4 1.6V5.2" stroke="#7fb0dc" stroke-width="0.7"/></svg>
<div class="t" style="left:118px;top:373.72px;font-size:6.1px;color:#222;transform:scaleX(0.776);">Date</div>
<svg class="a" style="left:110px;top:381.20px" width="6.5" height="6.5" viewBox="0 0 6.5 6.5"><rect x="0.5" y="0.5" width="5.5" height="5.8" fill="#fff" stroke="#e3c59a" stroke-width="0.8"/><path d="M2.4 1.6V5.2" stroke="#7fb0dc" stroke-width="0.7"/></svg>
<div class="t" style="left:118px;top:381.72px;font-size:6.1px;color:#222;transform:scaleX(0.821);">Number</div>
<div class="a" style="left:209.7px;top:49px;width:408.5px;height:338px;background:#ececec;"></div>
<div class="a" style="left:209.7px;top:49px;width:408.5px;height:0.8px;background:#ffffff;"></div>
<div class="a" style="left:209.7px;top:73px;width:408.5px;height:0.8px;background:#d4d4d4;"></div>
<div class="a" style="left:209.7px;top:78.9px;width:408.5px;height:1.2px;background:#f3f3f3;"></div>
<svg class="a" style="left:211.2px;top:52.1px" width="7" height="7" viewBox="0 0 7 7"><path d="M0.5 0.4H3.6L4.8 1.6V6.2H0.5z" fill="#f2f2f2" stroke="#b5b5b5" stroke-width="0.6"/><path d="M2 6.4Q2.4 4.6 4 4.6Q5.6 4.6 6.4 6.4z" fill="#6fb33a"/></svg>
<svg class="a" style="left:218px;top:55.40px" width="4" height="3" viewBox="0 0 4 3"><path d="M0.5 0.5h2.6l-1.3 1.8z" fill="#5577aa"/></svg>
<div class="a" style="left:223.3px;top:52px;width:0.6px;height:8.5px;background:#d2d2d2;"></div>
<div class="a" style="left:254.5px;top:52px;width:0.6px;height:8.5px;background:#d2d2d2;"></div>
<div class="a" style="left:269.5px;top:52px;width:0.6px;height:8.5px;background:#d2d2d2;"></div>
<div class="a" style="left:308.5px;top:52px;width:0.6px;height:8.5px;background:#d2d2d2;"></div>
<div class="a" style="left:348.5px;top:52px;width:0.6px;height:8.5px;background:#d2d2d2;"></div>
<div class="a" style="left:363.3px;top:52px;width:0.6px;height:8.5px;background:#d2d2d2;"></div>
<svg class="a" style="left:225.4px;top:52.1px" width="5.2" height="6.8" viewBox="0 0 5.2 6.8"><rect x="0.3" y="0.3" width="4.6" height="6.2" rx="0.5" fill="#dcdcdc" stroke="#a9a9a9" stroke-width="0.5"/><rect x="1" y="1.2" width="3.2" height="4.4" fill="#8cc24a"/><rect x="1.4" y="1.6" width="1" height="1.4" fill="#c9e6a8"/></svg>
<div class="t" style="left:232px;top:53.12px;font-size:6.1px;color:#222;transform:scaleX(0.715);">Nexus 4</div>
<svg class="a" style="left:249.3px;top:55.40px" width="4" height="3" viewBox="0 0 4 3"><path d="M0.5 0.5h2.6l-1.3 1.8z" fill="#8a8a8a"/></svg>
<div class="a" style="left:257px;top:53.2px;width:6px;height:5.5px;border:0.8px solid #8a8a8a;border-radius:2px 2px 0 0;background:#fbfbfb"></div>
<svg class="a" style="left:264.5px;top:55.40px" width="4" height="3" viewBox="0 0 4 3"><path d="M0.5 0.5h2.6l-1.3 1.8z" fill="#8a8a8a"/></svg>
<div class="a" style="left:272.5px;top:53.2px;width:5.5px;height:5.5px;border-radius:50%;border:1px solid #6a9a3a;background:#e8f0dc"></div>
<div class="t" style="left:279.3px;top:53.12px;font-size:6.1px;color:#222;transform:scaleX(0.759);">NoActionBar</div>
<div class="a" style="left:310px;top:53px;width:6px;height:6px;background:#f8f8f8;border:0.6px solid #cfcfcf;border-top:1.6px solid #8bc34a"></div>
<div class="t" style="left:317px;top:53.12px;font-size:6.1px;color:#222;transform:scaleX(0.768);">MainActivity</div>
<svg class="a" style="left:343px;top:55.40px" width="4" height="3" viewBox="0 0 4 3"><path d="M0.5 0.5h2.6l-1.3 1.8z" fill="#8a8a8a"/></svg>
<div class="a" style="left:351px;top:53.5px;width:5.5px;height:5.5px;border-radius:50%;background:#5b9bd5"></div>
<svg class="a" style="left:358px;top:55.40px" width="4" height="3" viewBox="0 0 4 3"><path d="M0.5 0.5h2.6l-1.3 1.8z" fill="#8a8a8a"/></svg>
<div class="a" style="left:365px;top:53.3px;width:6px;height:6px;border-radius:40% 40% 10% 10%;background:#7cb342"></div>
<div class="t" style="left:372px;top:53.12px;font-size:6.1px;color:#222;transform:scaleX(0.811);">23</div>
<svg class="a" style="left:378.3px;top:55.40px" width="4" height="3" viewBox="0 0 4 3"><path d="M0.5 0.5h2.6l-1.3 1.8z" fill="#8a8a8a"/></svg>
<svg class="a" style="left:210px;top:62.4px" width="6.5" height="6.8" viewBox="0 0 6.5 6.8"><rect x="0.3" y="0.3" width="6" height="6.2" fill="#bdbdbd" stroke="#9a9a9a" stroke-width="0.5"/><rect x="1" y="1" width="2" height="2" fill="#f4f4f4"/><rect x="3.6" y="1" width="2" height="2" fill="#f4f4f4"/><rect x="1" y="3.6" width="2" height="2.2" fill="#f4f4f4"/><rect x="3.6" y="3.6" width="2" height="2.2" fill="#f4f4f4"/><rect x="2.6" y="2.6" width="1.3" height="1.3" fill="#333"/></svg>
<div class="a" style="left:217.6px;top:66px;width:1.4px;height:1.2px;background:#3b5f9a;border-radius:50%"></div>
<svg class="a" style="left:222.2px;top:62.4px" width="6.8" height="6.8" viewBox="0 0 6.8 6.8"><rect x="0.4" y="0.4" width="6" height="6" rx="0.6" fill="#f2f2f2" stroke="#a0a0a0" stroke-width="0.7"/><path d="M1.3 3.4L2.5 2.5V4.3zM5.5 3.4L4.3 2.5V4.3z" fill="#333"/><rect x="1" y="5.2" width="4.8" height="0.8" fill="#cfcfcf"/></svg>
<svg class="a" style="left:231.2px;top:62.4px" width="6.8" height="6.8" viewBox="0 0 6.8 6.8"><rect x="0.4" y="0.4" width="6" height="6" rx="0.6" fill="#f2f2f2" stroke="#a0a0a0" stroke-width="0.7"/><path d="M3.4 1.2L2.5 2.4H4.3zM3.4 5.6L2.5 4.4H4.3z" fill="#333"/><rect x="3.1" y="2.2" width="0.6" height="2.4" fill="#333"/></svg>
<div class="a" style="left:539px;top:62px;width:10px;height:9.8px;background:#a9a9a9;border-radius:1px"></div>
<svg class="a" style="left:541.5px;top:64.5px" width="5" height="5" viewBox="0 0 5 5"><path d="M0.8 0.8L4 4M0.8 0.8V2.6M0.8 0.8H2.6" fill="none" stroke="#5b9bd5" stroke-width="0.8"/></svg>
<svg class="a" style="left:550.3px;top:63.2px" width="7" height="7" viewBox="0 0 7 7"><circle cx="2.8" cy="2.8" r="2.2" fill="#f2f6fa" stroke="#9ab0c4" stroke-width="0.7"/><path d="M4.4 4.4L6.4 6.4" stroke="#9ab0c4" stroke-width="1"/><path d="M1.8 2.2H3.8M1.8 3.4H3.8" stroke="#b8c8d8" stroke-width="0.5"/></svg>
<div class="a" style="left:560.5px;top:62px;width:0.6px;height:9px;background:#d0d0d0;"></div>
<svg class="a" style="left:563px;top:63.2px" width="7" height="7" viewBox="0 0 7 7"><circle cx="2.8" cy="2.8" r="2.2" fill="#f6f6f6" stroke="#7a8a9a" stroke-width="0.7"/><path d="M4.4 4.4L6.4 6.4" stroke="#7a8a9a" stroke-width="1"/><path d="M1.6 2.8H4M2.8 1.6V4" stroke="#3b7fc4" stroke-width="0.7"/></svg>
<svg class="a" style="left:573px;top:63.2px" width="7" height="7" viewBox="0 0 7 7"><circle cx="2.8" cy="2.8" r="2.2" fill="#f6f6f6" stroke="#7a8a9a" stroke-width="0.7"/><path d="M4.4 4.4L6.4 6.4" stroke="#7a8a9a" stroke-width="1"/><path d="M1.6 2.8H4" stroke="#3b7fc4" stroke-width="0.7"/></svg>
<svg class="a" style="left:583.8px;top:62.8px" width="5" height="7" viewBox="0 0 5 7"><rect x="0.4" y="0.4" width="4" height="6.2" rx="0.5" fill="#e6ecf2" stroke="#8a8a8a" stroke-width="0.6"/><rect x="1" y="1.3" width="2.8" height="4" fill="#c5d3e0"/></svg>
<svg class="a" style="left:593px;top:62.8px" width="7" height="7" viewBox="0 0 7 7"><path d="M3.4 0.8A2.6 2.6 0 1 0 6 3.4" fill="none" stroke="#3a8fd4" stroke-width="1.1"/><path d="M4.2 0L6.4 1.1L4.4 2.4z" fill="#3a8fd4"/><rect x="1" y="4.4" width="2" height="1.4" fill="#3a8fd4"/></svg>
<svg class="a" style="left:610.8px;top:62.8px" width="7" height="7" viewBox="0 0 7 7"><circle cx="3" cy="3" r="2.4" fill="#3a8fd4"/><path d="M3 0V6M0 3H6M0.9 0.9L5.1 5.1M5.1 0.9L0.9 5.1" stroke="#3a8fd4" stroke-width="0.9"/><circle cx="3" cy="3" r="1" fill="#eaf3fb"/><path d="M5.6 6.2H6.8" stroke="#333" stroke-width="0.6"/></svg>
<div class="a" style="left:215.8px;top:80.1px;width:402.9px;height:307.2px;background:#959595;"></div>
<div class="a" style="left:228px;top:82.3px;width:177.2px;height:294.4px;box-shadow:2.5px 3px 4px 1px rgba(0,0,0,.6)"></div>
<div class="a" style="left:227.8px;top:82.3px;width:177.4px;height:11.5px;background:#505050;"></div>
<div class="a" style="left:227.8px;top:93.8px;width:177.4px;height:25.9px;background:#646b92;"></div>
<div class="a" style="left:227.8px;top:119.7px;width:177.4px;height:235.5px;background:#fafafa;"></div>
<div class="a" style="left:227.8px;top:119.7px;width:177.4px;height:1.5px;background:linear-gradient(rgba(0,0,0,.18),rgba(0,0,0,0));"></div>
<div class="a" style="left:227.8px;top:355.2px;width:177.4px;height:21.6px;background:#000000;"></div>
<svg class="a" style="left:369.5px;top:84.5px" width="10" height="8" viewBox="0 0 10 8"><path d="M0.2 1.5Q4.7 -1.5 9.2 1.5L4.7 7.2z" fill="#c8c8c8"/></svg>
<div class="a" style="left:381px;top:84.3px;width:4.5px;height:7.3px;background:#c8c8c8;border-radius:0.5px"></div>
<div class="a" style="left:382.3px;top:83.6px;width:2px;height:1px;background:#c8c8c8;"></div>
<div class="t" style="left:388px;top:83.99px;font-size:8.2px;color:#c4c4c4;transform:scaleX(0.890);-webkit-text-stroke:0">6:00</div>
<div class="t" style="left:235px;top:128.02px;font-size:6.5px;color:#6e6e6e;-webkit-text-stroke:0">Hello World!</div>
<svg class="a" style="left:251px;top:361.5px" width="9" height="9" viewBox="0 0 9 9"><path d="M7.6 0.7V8.1L1 4.4z" fill="none" stroke="#e6e6e6" stroke-width="0.9"/></svg>
<div class="a" style="left:312px;top:362px;width:8.4px;height:8.4px;border-radius:50%;border:0.9px solid #e6e6e6"></div>
<div class="a" style="left:373.5px;top:362px;width:7px;height:7px;background:none;border:0.9px solid #d8d8d8;border-radius:0.8px"></div>
<div class="a" style="left:372px;top:322px;width:25.4px;height:25.4px;border-radius:50%;background:#fa4780;box-shadow:0.5px 1.5px 2px rgba(0,0,0,.35)"></div>
<svg class="a" style="left:378.8px;top:331px" width="11.5" height="7.5" viewBox="0 0 11.5 7.5"><rect x="0.3" y="0.3" width="10.9" height="6.9" fill="#fff"/><path d="M0.3 0.6L5.75 4.4L11.2 0.6" fill="none" stroke="#fa4780" stroke-width="0.8"/><path d="M0.3 7L4.2 3.3M11.2 7L7.3 3.3" stroke="#f9a9c4" stroke-width="0.5"/></svg>
<div class="a" style="left:618.3px;top:49px;width:142px;height:340px;background:#ffffff;"></div>
<div class="a" style="left:618.3px;top:49px;width:0.7px;height:11.3px;background:#d0d0d0;"></div>
<div class="a" style="left:619px;top:49.5px;width:141px;height:10.8px;background:#ececec;"></div>
<div class="t" style="left:621px;top:53.56px;font-size:5px;color:#222;transform:scaleX(0.913);">Component Tree</div>
<svg class="a" style="left:722px;top:51.8px" width="5.5" height="6.5" viewBox="0 0 5.5 6.5"><path d="M0.3 0.5H5.2M0.3 6H5.2" stroke="#8a8a8a" stroke-width="0.6"/><path d="M2.75 1.2L1.2 2.8H4.3zM2.75 5.3L1.2 3.7H4.3z" fill="#3b8fd4"/></svg>
<svg class="a" style="left:730.8px;top:51.8px" width="5.5" height="6.5" viewBox="0 0 5.5 6.5"><path d="M2.75 0.2L1.4 1.6H4.1zM2.75 6.3L1.4 4.9H4.1z" fill="#3b8fd4"/><rect x="0.4" y="2" width="4.7" height="2.5" fill="#b8b8b8"/></svg>
<div class="a" style="left:738.3px;top:52.5px;width:0.6px;height:6.5px;background:#cfcfcf;"></div>
<svg class="a" style="left:741px;top:52.3px" width="5.5" height="5.5" viewBox="0 0 5.5 5.5"><circle cx="2.6" cy="2.6" r="2.2" fill="#8d8d8d"/><circle cx="2.6" cy="2.6" r="0.9" fill="#ececec"/></svg>
<div class="a" style="left:746.8px;top:55.2px;width:1.3px;height:0.7px;background:#8d8d8d;"></div>
<svg class="a" style="left:752px;top:52.3px" width="6" height="5.5" viewBox="0 0 6 5.5"><path d="M0.3 2.7H3.8M2.6 1.6L3.9 2.7L2.6 3.8" fill="none" stroke="#666" stroke-width="0.6"/><rect x="4.4" y="0.5" width="0.9" height="4.6" fill="#666"/></svg>
<div class="a" style="left:619px;top:60.3px;width:141px;height:8.4px;background:#dcdcdc;"></div>
<svg class="a" style="left:621.3px;top:62.8px" width="3" height="4" viewBox="0 0 3 4"><path d="M0 0v3.6l2.6-1.8z" fill="#a8a8a8"/></svg>
<div class="a" style="left:629.3px;top:61.5px;width:4px;height:6.3px;background:#5a9fd8;border:0.7px solid #3d6f9a;border-radius:0.6px"></div>
<div class="t" style="left:636px;top:62.02px;font-size:6.1px;color:#222;transform:scaleX(0.789);">Shown in @layout/activity_main</div>
<div class="a" style="left:619px;top:197.3px;width:141px;height:12.3px;background:#e7e7e7;"></div>
<div class="t" style="left:621px;top:201.56px;font-size:5px;color:#222;transform:scaleX(0.922);">Properties</div>
<div class="t" style="left:726px;top:200.28px;font-size:7px;color:#666;transform:scaleX(1.028);">?</div>
<svg class="a" style="left:736.5px;top:200.5px" width="5" height="6" viewBox="0 0 5 6"><path d="M1 1.2H3.3Q4.6 1.2 4.6 3Q4.6 4.8 3.3 4.8H0.8M1.8 0.2L0.6 1.2L1.8 2.2" fill="none" stroke="#666" stroke-width="0.8"/></svg>
<svg class="a" style="left:748.8px;top:200.3px" width="5" height="6" viewBox="0 0 5 6"><path d="M0 0.3H5L3.1 2.8V5.7L1.9 5V2.8z" fill="#3a8fd4"/></svg>
<div class="t" style="left:671.3px;top:267.96px;font-size:5px;color:#8a8a8a;transform:scaleX(0.990);">Nothing to show</div>
<div class="a" style="left:760px;top:40px;width:8px;height:359px;background:#eaeaea;"></div>
<div class="a" style="left:759.8px;top:40px;width:0.6px;height:359px;background:#d0d0d0;"></div>
<svg class="a" style="left:761.3px;top:44px" width="5" height="4.5" viewBox="0 0 5 4.5"><path d="M0.5 4.3V0.6H4.5M0.5 2.4H3.8M0.5 4.1H4.5" fill="none" stroke="#2f76bd" stroke-width="0.9"/></svg>
<div class="t" style="left:745.68px;top:60.50px;font-size:5.2px;line-height:5.2px;color:#3a3a3a;transform-origin:50% 50%;transform:rotate(90deg) scaleX(0.698);-webkit-text-stroke:0.15px currentColor">Maven Projects</div>
<div class="a" style="left:761.5px;top:81px;width:4.2px;height:4.2px;border-radius:50%;border:1px solid #4caf50;background:#dff0d8"></div>
<div class="t" style="left:755.80px;top:93.65px;font-size:5.2px;line-height:5.2px;color:#3a3a3a;transform-origin:50% 50%;transform:rotate(90deg) scaleX(1.057);-webkit-text-stroke:0.15px currentColor">Gradle</div>
<svg class="a" style="left:761px;top:356.3px" width="5.5" height="5" viewBox="0 0 5.5 5"><path d="M0.4 0.8Q1.6 0 2.4 0V4.6H1.8V3.2H0.4zM0 1.4H0.3V2.6" fill="#7cb342"/><rect x="0.6" y="0.6" width="4" height="3" rx="0.4" fill="#7cb342"/><path d="M4.6 1.2Q5.4 2.1 4.6 3" fill="#7cb342"/><rect x="1.4" y="0" width="2.4" height="4.6" fill="#7cb342"/></svg>
<div class="t" style="left:746.84px;top:376.25px;font-size:5.2px;line-height:5.2px;color:#3a3a3a;transform-origin:50% 50%;transform:rotate(90deg) scaleX(0.987);-webkit-text-stroke:0.15px currentColor">Android Model</div>
<div class="a" style="left:104.7px;top:387.3px;width:655.3px;height:12px;background:#ececec;"></div>
<div class="a" style="left:104.7px;top:387.3px;width:655.3px;height:1.1px;background:#f4f4f4;"></div>
<div class="a" style="left:104.7px;top:388.4px;width:655.3px;height:0.7px;background:#d2d2d2;"></div>
<div class="a" style="left:108.8px;top:389px;width:19.7px;height:10.3px;background:#ffffff;"></div>
<div class="a" style="left:128.5px;top:389px;width:21px;height:10.3px;background:#d8d8d8;"></div>
<div class="t" style="left:111.5px;top:391.42px;font-size:6.1px;color:#222;transform:scaleX(0.737);">Design</div>
<div class="t" style="left:133.5px;top:391.42px;font-size:6.1px;color:#333;transform:scaleX(0.894);">Text</div>
<div class="a" style="left:0px;top:399px;width:768px;height:8.4px;background:#ececec;"></div>
<div class="a" style="left:0px;top:399px;width:768px;height:0.7px;background:#cfcfcf;"></div>
<svg class="a" style="left:12px;top:401.3px" width="5.2" height="5" viewBox="0 0 5.2 5"><rect x="0" y="0" width="5" height="4.8" fill="#9d9d9d"/><path d="M0.6 1.2H4.4M0.6 2.4H4.4M0.6 3.6H4.4" stroke="#d8d8d8" stroke-width="0.5"/></svg>
<div class="t" style="left:18px;top:401.42px;font-size:6.1px;color:#222;transform:scaleX(0.781);">Terminal</div>
<svg class="a" style="left:44.5px;top:400.8px" width="6.5" height="6" viewBox="0 0 6.5 6"><path d="M1 1.8Q3.25 -0.3 5.5 1.8z" fill="#7cb342"/><rect x="1" y="2" width="4.5" height="2.3" fill="#7cb342"/><rect x="0" y="2.1" width="0.7" height="1.8" fill="#7cb342"/><rect x="5.8" y="2.1" width="0.7" height="1.8" fill="#7cb342"/><rect x="1.8" y="4.2" width="1" height="1.4" fill="#7cb342"/><rect x="3.7" y="4.2" width="1" height="1.4" fill="#7cb342"/></svg>
<div class="t" style="left:52px;top:401.42px;font-size:6.1px;color:#222;transform:scaleX(0.798);">6: Android Monitor</div>
<div class="a" style="left:101px;top:401.5px;width:5px;height:5px;background:#e5a040;border:0.7px solid #b07020"></div>
<div class="t" style="left:108px;top:401.42px;font-size:6.1px;color:#222;transform:scaleX(0.752);">0: Messages</div>
<div class="a" style="left:141.5px;top:401.3px;width:5px;height:5.5px;background:#d5e4f0;border:0.7px solid #6a8aa8"></div>
<div class="t" style="left:148px;top:401.42px;font-size:6.1px;color:#222;transform:scaleX(0.714);">TODO</div>
<svg class="a" style="left:680.5px;top:401.2px" width="5" height="5" viewBox="0 0 5 5"><path d="M0.3 0.3H4.6V3.4H2.2L1.2 4.6V3.4H0.3z" fill="#a9a9a9"/></svg>
<div class="t" style="left:688px;top:401.42px;font-size:6.1px;color:#333;transform:scaleX(0.692);">Event Log</div>
<svg class="a" style="left:717px;top:401.2px" width="5" height="5" viewBox="0 0 5 5"><rect x="0.4" y="0.4" width="4.2" height="4.2" fill="#c8d8e8" stroke="#5b9bd5" stroke-width="0.7"/><rect x="1.8" y="1.8" width="1.4" height="1.4" fill="#3a6a9a"/></svg>
<div class="t" style="left:724.5px;top:401.42px;font-size:6.1px;color:#333;transform:scaleX(0.743);">Gradle Console</div>
<div class="a" style="left:0px;top:407.4px;width:768px;height:8px;background:#e8e8e8;"></div>
<div class="a" style="left:0px;top:407.4px;width:768px;height:0.6px;background:#d8d8d8;"></div>
<div class="a" style="left:2.2px;top:409px;width:5.5px;height:5.5px;background:#c9c9c9;border:0.7px solid #9a9a9a"></div>
<div class="t" style="left:11px;top:409.02px;font-size:6.1px;color:#222;transform:scaleX(0.767);">Gradle build finished in 8s 959ms (7 minutes ago)</div>
<div class="a" style="left:662px;top:408px;width:0.6px;height:7px;background:#cfcfcf;"></div>
<div class="a" style="left:679px;top:408px;width:0.6px;height:7px;background:#cfcfcf;"></div>
<div class="a" style="left:692.5px;top:408px;width:0.6px;height:7px;background:#cfcfcf;"></div>
<div class="a" style="left:749px;top:408px;width:0.6px;height:7px;background:#cfcfcf;"></div>
<div class="t" style="left:665px;top:409.02px;font-size:6.1px;color:#888;transform:scaleX(0.826);">n/a</div>
<div class="t" style="left:682px;top:409.02px;font-size:6.1px;color:#888;transform:scaleX(0.885);">n/a</div>
<div class="t" style="left:694px;top:409.02px;font-size:6.1px;color:#888;transform:scaleX(0.788);">Context: &lt;no context&gt;</div>
<svg class="a" style="left:751.5px;top:409.3px" width="5" height="5" viewBox="0 0 5 5"><rect x="1.6" y="2" width="2.8" height="2.6" fill="#666"/><path d="M0.8 2.2V1.2Q0.8 0.3 1.7 0.3Q2.6 0.3 2.6 1.2V2" fill="none" stroke="#888" stroke-width="0.6"/></svg>
<svg class="a" style="left:760.5px;top:409px" width="5" height="6" viewBox="0 0 5 6"><rect x="0.8" y="1.4" width="3.4" height="4.2" rx="0.5" fill="#c2c2c2"/><rect x="0.3" y="0.6" width="4.4" height="0.8" fill="#b0b0b0"/></svg>
<div class="a" style="left:0px;top:415.5px;width:768px;height:1.5px;background:#35628f;"></div>
</body></html>
